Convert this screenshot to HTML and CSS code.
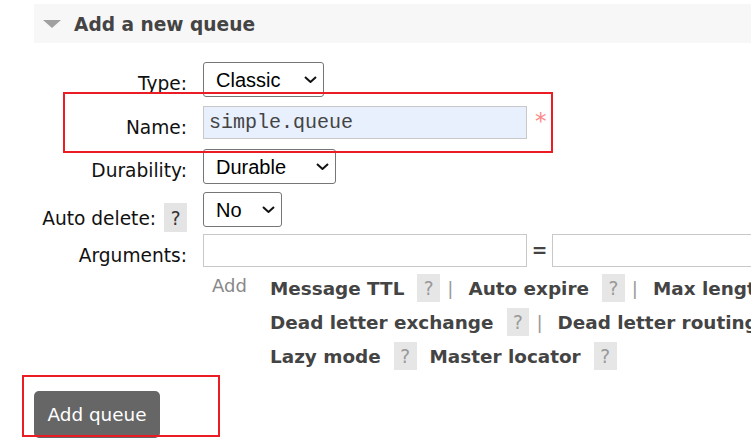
FILE: index.html
```html
<!DOCTYPE html>
<html lang="en">
<head>
<meta charset="utf-8">
<title>Add a new queue</title>
<link rel="stylesheet" href="styles.css">
</head>
<body>
<div class="page">
  <div class="section-head">
    <svg class="tri" width="18" height="8" viewBox="0 0 18 8"><polygon points="0,0 18,0 9,8" fill="#a0a0a0"/></svg>
    <h2 class="title">Add a new queue</h2>
  </div>

  <form class="form">
    <div class="row row-type">
      <label class="lbl">Type:</label>
      <div class="ctl">
        <span class="sel sel-type">
          <select><option>Classic</option><option>Quorum</option></select>
          <svg class="chev" width="13" height="7" viewBox="0 0 13 7"><path d="M1 1 L6.5 6 L12 1" fill="none" stroke="#111" stroke-width="2"/></svg>
        </span>
      </div>
    </div>

    <div class="row row-name">
      <label class="lbl">Name:</label>
      <div class="ctl">
        <input class="txt name-input" type="text" value="simple.queue">
        <span class="req">*</span>
      </div>
    </div>

    <div class="row row-dur">
      <label class="lbl">Durability:</label>
      <div class="ctl">
        <span class="sel sel-dur">
          <select><option>Durable</option><option>Transient</option></select>
          <svg class="chev" width="13" height="7" viewBox="0 0 13 7"><path d="M1 1 L6.5 6 L12 1" fill="none" stroke="#111" stroke-width="2"/></svg>
        </span>
      </div>
    </div>

    <div class="row row-auto">
      <label class="lbl">Auto delete:<span class="help help-dark">?</span></label>
      <div class="ctl">
        <span class="sel sel-no">
          <select><option>No</option><option>Yes</option></select>
          <svg class="chev" width="13" height="7" viewBox="0 0 13 7"><path d="M1 1 L6.5 6 L12 1" fill="none" stroke="#111" stroke-width="2"/></svg>
        </span>
      </div>
    </div>

    <div class="row row-args">
      <label class="lbl">Arguments:</label>
      <div class="ctl ctl-args">
        <div class="arg-inputs">
          <input class="txt arg-input" type="text">
          <span class="eq">=</span>
          <input class="txt arg-input" type="text">
        </div>
        <div class="arg-help">
          <span class="add-link">Add</span>
          <div class="opts">
            <div class="line"><span class="opt">Message TTL</span><span class="help">?</span><span class="sep">|</span><span class="opt">Auto expire</span><span class="help">?</span><span class="sep">|</span><span class="opt">Max length</span><span class="help">?</span></div>
            <div class="line"><span class="opt">Dead letter exchange</span><span class="help">?</span><span class="sep">|</span><span class="opt">Dead letter routing key</span><span class="help">?</span></div>
            <div class="line"><span class="opt">Lazy mode</span><span class="help">?</span><span class="opt opt-gap">Master locator</span><span class="help">?</span></div>
          </div>
        </div>
      </div>
    </div>

    <button class="btn" type="button">Add queue</button>
  </form>
</div>

<div class="mark mark-name"></div>
<div class="mark mark-btn"></div>
</body>
</html>
```

FILE: styles.css
```css
html, body {
  margin: 0;
  padding: 0;
  overflow: hidden;
  background: #fff;
}

body {
  position: relative;
  width: 751px;
  height: 447px;
  font-family: "DejaVu Sans", Verdana, sans-serif;
  font-size: 18.6px;
  color: #111;
}

.page {
  padding-left: 34px;
}

.section-head {
  margin-top: 4px;
  height: 39px;
  box-sizing: border-box;
  padding-top: 2px;
  background: #f7f7f7;
  display: flex;
  align-items: center;
}

.tri {
  margin-left: 9px;
  margin-right: 13px;
  flex: none;
  margin-top: -1px;
}

.title {
  margin: 0;
  font-size: 18.6px;
  font-weight: bold;
  color: #444;
  line-height: 37px;
}

.form {
  margin-top: 19px;
}

.row {
  display: flex;
  align-items: flex-start;
}

.row-type { height: 35px; margin-bottom: 9px; }
.row-name { height: 33px; margin-bottom: 10px; }
.row-dur { height: 35px; margin-bottom: 8px; }
.row-auto { height: 35px; margin-bottom: 7px; }
.row-args { margin-bottom: 17px; }

.lbl {
  width: 153px;
  flex: none;
  text-align: right;
  padding-top: 11px;
  line-height: 22px;
  white-space: nowrap;
}

.ctl {
  margin-left: 16px;
  display: flex;
  align-items: center;
}

.ctl-args {
  display: block;
}

.sel {
  position: relative;
  display: inline-block;
}

.sel select {
  appearance: none;
  -webkit-appearance: none;
  display: block;
  height: 35px;
  box-sizing: border-box;
  border: 1px solid #767676;
  border-radius: 3px;
  background: #fff;
  color: #000;
  font-family: "Liberation Sans", Arial, sans-serif;
  font-size: 20px;
  padding: 1px 0 0 12px;
  margin: 0;
}

.sel-type select { width: 121px; }
.sel-dur select { width: 133px; }
.sel-no select { width: 79px; }

.chev {
  position: absolute;
  right: 7px;
  top: 14px;
  pointer-events: none;
}

.txt {
  box-sizing: border-box;
  height: 33px;
  width: 324px;
  border: 1px solid #c8c8c8;
  border-radius: 0;
  margin: 0;
  padding: 0 0 0 5px;
  font-family: "Liberation Mono", "Courier New", monospace;
  font-size: 20px;
  color: #444;
  background: #fff;
  outline: none;
}

.name-input {
  background: #e8f0fe;
}

.req {
  margin-left: 8px;
  color: #f88;
  font-size: 23px;
  line-height: 30px;
  align-self: flex-start;
}

.help {
  display: inline-block;
  background: #e6e6e6;
  color: #999;
  font-weight: normal;
  font-size: 18.6px;
  line-height: 22px;
  padding: 4px 6.5px 2px;
  margin-left: 13px;
}

.help-dark {
  color: #333;
  margin-left: 8px;
  background: #e4e4e4;
  padding: 5px 6.5px 2px;
}

.arg-inputs {
  display: flex;
  align-items: center;
  width: 700px;
}

.arg-input {
  flex: none;
}

.eq {
  width: 25px;
  text-align: center;
  color: #444;
  font-weight: bold;
  flex: none;
}

.arg-help {
  display: flex;
  margin-top: 5px;
}

.add-link {
  flex: none;
  padding-left: 9px;
  width: 35px;
  font-size: 18px;
  line-height: 28px;
  color: #888;
}

.opts {
  margin-left: 23px;
  font-size: 18.4px;
}

.line {
  height: 34px;
  line-height: 34px;
  white-space: nowrap;
}

.opt {
  font-weight: bold;
  color: #444;
}

.opt-gap {
  margin-left: 13px;
}

.sep {
  display: inline-block;
  margin: 0 15px 0 7px;
  color: #999;
}

.btn {
  display: block;
  width: 126px;
  height: 47px;
  padding: 0;
  border: 0;
  border-radius: 5px;
  background: #666;
  color: #fff;
  font-family: "DejaVu Sans", Verdana, sans-serif;
  font-size: 18.4px;
}

.mark {
  position: absolute;
  border: 2px solid #ec1c24;
  box-sizing: border-box;
  pointer-events: none;
}

.mark-name {
  left: 63px;
  top: 92px;
  width: 490px;
  height: 61px;
}

.mark-btn {
  left: 22px;
  top: 375px;
  width: 198px;
  height: 62px;
}
```
